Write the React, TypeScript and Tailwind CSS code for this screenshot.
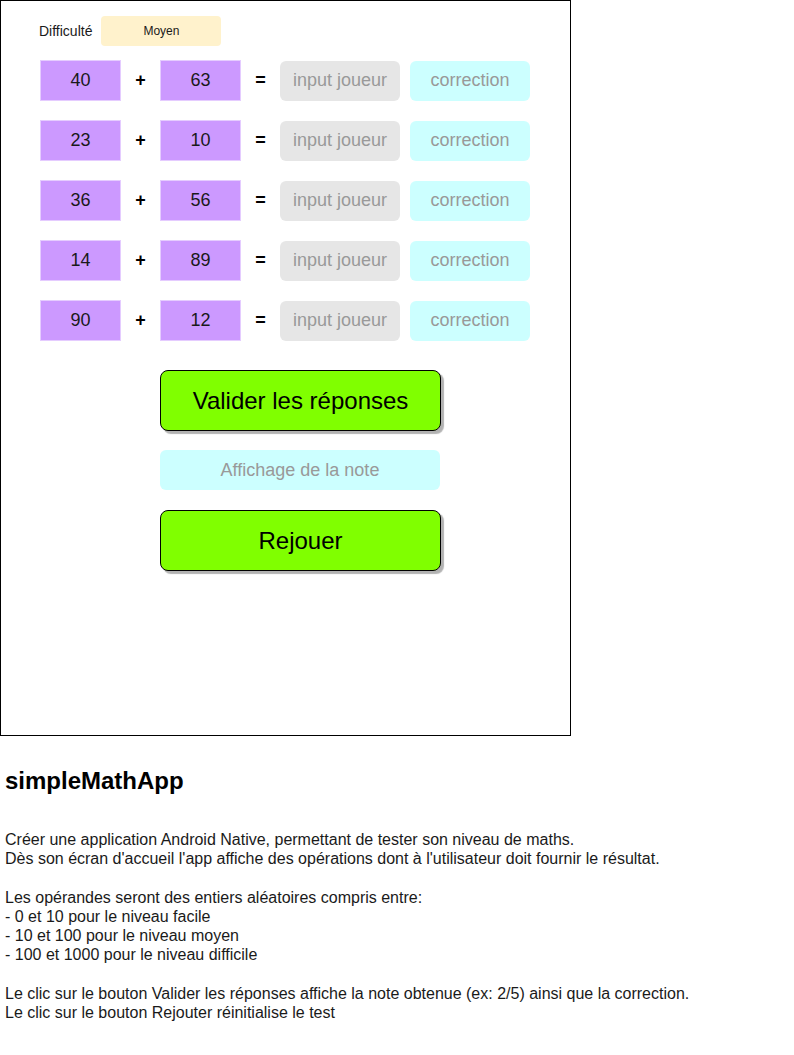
const rows = [
  [40, 63],
  [23, 10],
  [36, 56],
  [14, 89],
  [90, 12],
];

const OperandBox = ({ value }: { value: number }) => (
  <div className="flex h-[41px] w-[81px] items-center justify-center border border-[#e5ccff] bg-[#cc99ff] text-[18px] text-[#1a1a1a]">
    {value}
  </div>
);

const Operator = ({ sign }: { sign: string }) => (
  <div className="flex h-[41px] w-[39px] items-center justify-center text-[18px] font-bold text-black">
    {sign}
  </div>
);

const MainButton = ({ label }: { label: string }) => (
  <button
    className="flex h-[61px] w-[281px] items-center justify-center rounded-[8px] border border-black bg-[#80ff00] text-[24px] text-black shadow-[3px_3px_1px_rgba(0,0,0,0.3)]"
    type="button"
  >
    {label}
  </button>
);

export default function App() {
  return (
    <div className="min-h-[1055px] w-[794px] bg-white font-['Liberation_Sans',Arial,sans-serif] text-black">
      <div className="box-border h-[736px] w-[571px] border border-black pl-[38px] pt-[15px]">
        <div className="flex items-center">
          <span className="text-[14px] text-[#1a1a1a]">Difficulté</span>
          <div className="ml-[9px] flex h-[30px] w-[120px] items-center justify-center rounded-[4px] bg-[#fff2cc] text-[12px] text-[#1a1a1a]">
            Moyen
          </div>
        </div>

        <div className="ml-[1px] mt-[14px] flex flex-col gap-[19px]">
          {rows.map(([a, b], i) => (
            <div key={i} className="flex items-center">
              <OperandBox value={a} />
              <Operator sign="+" />
              <OperandBox value={b} />
              <Operator sign="=" />
              <div className="flex h-[40px] w-[120px] items-center justify-center rounded-[6px] bg-[#e6e6e6] text-[18px] text-[#999999]">
                input joueur
              </div>
              <div className="ml-[10px] flex h-[40px] w-[120px] items-center justify-center rounded-[6px] bg-[#ccffff] text-[18px] text-[#999999]">
                correction
              </div>
            </div>
          ))}
        </div>

        <div className="ml-[121px] mt-[29px] flex flex-col">
          <MainButton label="Valider les réponses" />
          <div className="mt-[19px] flex h-[40px] w-[280px] items-center justify-center rounded-[6px] bg-[#ccffff] text-[18px] text-[#999999]">
            Affichage de la note
          </div>
          <div className="mt-[20px]">
            <MainButton label="Rejouer" />
          </div>
        </div>
      </div>

      <div className="pl-[5px]">
        <h1 className="mt-[31px] text-[24px] font-bold leading-[28px]">simpleMathApp</h1>
        <div className="mt-[35px] text-[16px] leading-[19.2px] text-[#1a1a1a]">
          <p>Créer une application Android Native, permettant de tester son niveau de maths.</p>
          <p>Dès son écran d'accueil l'app affiche des opérations dont à l'utilisateur doit fournir le résultat.</p>
          <p className="h-[19.2px]" />
          <p>Les opérandes seront des entiers aléatoires compris entre:</p>
          <p>- 0 et 10 pour le niveau facile</p>
          <p>- 10 et 100 pour le niveau moyen</p>
          <p>- 100 et 1000 pour le niveau difficile</p>
          <p className="h-[19.2px]" />
          <p>Le clic sur le bouton Valider les réponses affiche la note obtenue (ex: 2/5) ainsi que la correction.</p>
          <p>Le clic sur le bouton Rejouter réinitialise le test</p>
        </div>
      </div>
    </div>
  );
}
